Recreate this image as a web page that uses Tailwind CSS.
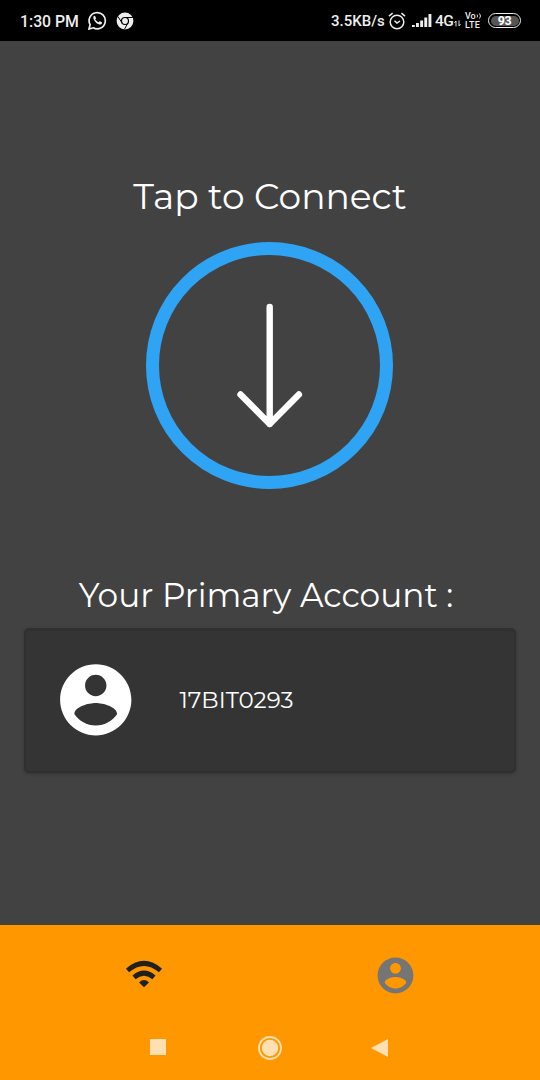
<!DOCTYPE html>
<html lang="en">
<head>
<meta charset="utf-8">
<title>Tap to Connect</title>
<script src="https://cdn.jsdelivr.net/npm/@tailwindcss/browser@4"></script>
</head>
<body class="w-[540px] h-[1080px] overflow-hidden bg-[#424242] text-white flex flex-col">
<header class="h-[41px] shrink-0 bg-black flex items-center pl-[20px] pr-[19px] font-['Roboto',sans-serif] font-medium text-[#eeeeee] leading-none">
  <span class="text-[15.8px] whitespace-nowrap w-[59px] mr-[9px] pt-[2px]">1:30 PM</span>
  <svg class="w-[19px] h-[19px] mr-[9px]" viewBox="0 0 19 19" fill="none" stroke="#eee"><path stroke-width="1.7" d="M1 18l1.1-4.4A8.1 8.1 0 1 1 5.3 16.8z"/><path fill="#eee" stroke="none" d="M5.4 5.6c.6-1 1.5-1 1.9-.2l.7 1.5c.2.5-.5 1-.8 1.4.8 1.5 1.9 2.4 3.4 3 .5-.4.9-1.2 1.4-1l1.8.9c.6.3.1 1.6-.6 2-2.9 1.7-8.6-3.4-7.8-7.6z"/></svg>
  <svg class="w-[18px] h-[18px]" viewBox="0 0 18 18" fill="none" stroke="#000"><circle cx="9" cy="9" r="8.4" fill="#eee" stroke="none"/><circle cx="9" cy="9" r="3.5" stroke-width="1.2"/><path stroke-width="1" d="M9 5.5h7.8M6 10.8L2 4.7M12 10.8l-3.6 6.6"/></svg>
  <span class="ml-auto text-[15px] whitespace-nowrap w-[54px] mr-[3px] pt-[1px]">3.5KB/s</span>
  <svg class="w-[18px] h-[18px] mr-[6px]" viewBox="0 0 18 18" fill="none" stroke="#eee" stroke-width="1.5"><circle cx="9" cy="10" r="6.8"/><path d="M1 4.2L4.6 1.2M17 4.2l-3.6-3M6.5 8.7L9 11l3-2"/></svg>
  <svg class="w-[20px] h-[15px] mr-[3px]" viewBox="0 0 20 15" fill="#eee"><path d="M0 12h2.8v2H0zM4 10h2.9v4H4zM8.2 7.5h2.9V14H8.2zM12.3 4.5h2.9V14h-2.9zM16.5 1h2.9v13h-2.9z"/></svg>
  <span class="text-[15.5px] w-[19px] whitespace-nowrap tracking-[-0.5px] pt-[2px]">4G</span>
  <svg class="w-[7px] h-[7px] mt-[6px] mr-[4px]" viewBox="0 0 7 7" fill="none" stroke="#ddd"><path d="M2 6.5V1L.5 3M5 .5V6l1.5-2"/></svg>
  <span class="w-[17px] mr-[6px] text-[9px] leading-[9px] whitespace-nowrap flex flex-col"><span class="flex items-center">Vo<svg class="w-[6px] h-[6px]" viewBox="0 0 6 6" fill="none" stroke="#ddd"><path d="M1 1.5Q2.2 3 1 4.5M3.5.5Q5.5 3 3.5 5.5"/></svg></span><span class="tracking-[0.2px]">LTE</span></span>
  <span class="w-[33px] h-[15px] rounded-full border-[1.5px] border-[#eee] p-[1.5px] flex"><span class="flex-1 rounded-full bg-[#555] flex items-center justify-center text-[12.5px] font-bold text-white tracking-[-0.3px]"><span class="pt-px">93</span></span></span>
</header>
<main class="flex-1 flex flex-col items-center font-['Montserrat','Inter',sans-serif] font-normal">
  <h1 class="mt-[133px] h-[44px] leading-[44px] text-[36px] whitespace-nowrap">Tap to Connect</h1>
  <button class="mt-[24px] mr-[1px] w-[247px] h-[247px] rounded-full border-[13px] border-[#2fa4f4] flex items-center justify-center" aria-label="Connect">
    <svg class="w-[68px] h-[126px]" viewBox="0 0 68 126" fill="none" stroke="#fff" stroke-width="6.4" stroke-linecap="round" stroke-linejoin="round"><path d="M33.7 4v117M4.5 91.5L33.7 121l29.2-29.5"/></svg>
  </button>
  <h2 class="mt-[84px] mr-[8px] h-[44px] leading-[44px] text-[32.8px] whitespace-nowrap">Your Primary Account :</h2>
  <section class="mt-[11px] w-[492px] h-[145px] rounded-[5px] bg-[#343434] border-[2px] border-t-[3px] border-[#303030] shadow-[0_1px_3px_#333333] flex items-center pl-[27px]">
    <svg class="w-[85.5px] h-[85.5px] shrink-0 mb-[2px]" viewBox="0 0 24 24" fill="#fff"><path d="M12 2C6.48 2 2 6.48 2 12s4.48 10 10 10 10-4.48 10-10S17.52 2 12 2zm0 3c1.66 0 3 1.34 3 3s-1.34 3-3 3-3-1.34-3-3 1.34-3 3-3zm0 14.2c-2.5 0-4.71-1.28-6-3.22.03-1.99 4-3.08 6-3.08 1.99 0 5.97 1.09 6 3.08-1.29 1.94-3.5 3.22-6 3.22z"/></svg>
    <span class="ml-[41px] mb-[3px] text-[23px] leading-[30px] whitespace-nowrap">17BIT0293</span>
  </section>
</main>
<footer class="h-[155px] shrink-0 bg-[#ff9800]">
  <nav class="h-[100px] flex">
    <div class="w-[288px] flex justify-center"><svg class="w-[38px] h-[28px] mt-[35px]" viewBox="0 0 38 28" fill="none" stroke="#222018" stroke-width="4.9"><path d="M2.5 10.5Q19-3.8 35.5 10.5M9 17.3Q19 9 29 17.3"/><path fill="#222018" stroke="none" d="M14 22.4Q19 17.6 24 22.4L19 27.3z"/></svg></div>
    <div class="w-[215px] flex justify-center"><svg class="w-[43px] h-[43px] mt-[29px]" viewBox="0 0 24 24" fill="#757575"><path d="M12 2C6.48 2 2 6.48 2 12s4.48 10 10 10 10-4.48 10-10S17.52 2 12 2zm0 3c1.66 0 3 1.34 3 3s-1.34 3-3 3-3-1.34-3-3 1.34-3 3-3zm0 14.2c-2.5 0-4.71-1.28-6-3.22.03-1.99 4-3.08 6-3.08 1.99 0 5.97 1.09 6 3.08-1.29 1.94-3.5 3.22-6 3.22z"/></svg></div>
  </nav>
  <div class="h-[45px] flex items-center pl-[150px]">
    <div class="w-[16px] h-[16px] bg-[#ffe0b2] mb-px"></div>
    <svg class="w-[24px] h-[24px] ml-[92px]" viewBox="0 0 24 24"><circle cx="12" cy="12" r="11" fill="none" stroke="#ffe0b2" stroke-width="1.8"/><circle cx="12" cy="12" r="8.2" fill="#ffe0b2"/></svg>
    <svg class="w-[17px] h-[18px] ml-[89px]" viewBox="0 0 17 18" fill="#ffe0b2"><path d="M0 9L17 0v18z"/></svg>
  </div>
</footer>
</body>
</html>
